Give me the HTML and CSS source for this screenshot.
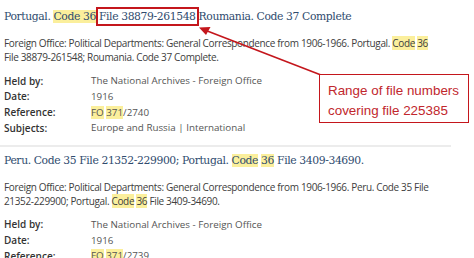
FILE: index.html
```html
<!DOCTYPE html>
<html>
<head>
<title>Search results</title>
<link rel="stylesheet" href="styles.css">
</head>
<body>

<div class="results">
    <!-- Record 1 -->
    <div class="record">
        <h2 class="record-title">Portugal. <mark>Code 36</mark> <span class="boxed">File 38879-261548</span> Roumania. Code 37 Complete</h2>
        <p class="record-desc">Foreign Office: Political Departments: General Correspondence from 1906-1966. Portugal. <mark>Code</mark> <mark>36</mark><br>File 38879-261548; Roumania. Code 37 Complete.</p>
        <table class="record-meta">
            <tr><th>Held by:</th><td>The National Archives - Foreign Office</td></tr>
            <tr><th>Date:</th><td>1916</td></tr>
            <tr><th>Reference:</th><td><mark>FO</mark> <mark>371</mark>/2740</td></tr>
            <tr><th>Subjects:</th><td>Europe and Russia | International</td></tr>
        </table>
    </div>

    <hr class="divider">

    <!-- Record 2 -->
    <div class="record">
        <h2 class="record-title">Peru. Code 35 File 21352-229900; Portugal. <mark>Code</mark> <mark>36</mark> File 3409-34690.</h2>
        <p class="record-desc">Foreign Office: Political Departments: General Correspondence from 1906-1966. Peru. Code 35 File<br>21352-229900; Portugal. <mark>Code</mark> <mark>36</mark> File 3409-34690.</p>
        <table class="record-meta">
            <tr><th>Held by:</th><td>The National Archives - Foreign Office</td></tr>
            <tr><th>Date:</th><td>1916</td></tr>
            <tr><th>Reference:</th><td><mark>FO</mark> <mark>371</mark>/2739</td></tr>
        </table>
    </div>
</div>

<!-- Annotation over the page -->
<svg class="annotation-arrow" width="474" height="258" viewBox="0 0 474 258">
    <line x1="206" y1="30.5" x2="321" y2="75" stroke="#c4161c" stroke-width="1.6"/>
    <polygon points="199,27.5 210.5,27 206,35" fill="#c4161c"/>
</svg>
<div class="callout">Range of file numbers<br>covering file 225385</div>

</body>
</html>
```

FILE: styles.css
```css
:root {
  --title-color: #2f4b6e;
  --text-color: #404040;
  --muted-color: #555;
  --highlight: #fbef9c;
  --annot-red: #c4161c;
}

body {
    margin: 0;
    padding: 7px 0 0 4px;
    background: #fff;
    font-family: 'Open Sans', sans-serif;
    color: var(--text-color);
    overflow: hidden;
}

mark {
    background: var(--highlight);
    color: inherit;
}

.record-title {
    margin: 0;
    font-family: 'DejaVu Serif', serif;
    font-weight: normal;
    font-size: 10.8px;
    line-height: 20px;
    letter-spacing: -0.4px;
    color: var(--title-color);
    white-space: nowrap;
}

.boxed {
    outline: 2px solid var(--annot-red);
    outline-offset: 1px;
}

.record-desc {
    margin: 9px 0 9px;
    font-size: 10px;
    line-height: 14px;
    letter-spacing: -0.35px;
    white-space: nowrap;
}

.record-meta {
    border-collapse: collapse;
    font-size: 9.8px;
}

.record-meta th,
.record-meta td {
    padding: 0;
    height: 15.67px;
    text-align: left;
    vertical-align: middle;
}

.record-meta th {
    width: 87px;
    font-weight: 600;
    font-size: 10px;
    color: #333;
}

.record-meta td {
    color: var(--muted-color);
}

.divider {
    width: 451px;
    margin: 9px 0 4px -4px;
    border: 0;
    border-top: 2px solid #ececec;
}

.annotation-arrow {
    position: absolute;
    left: 0;
    top: 0;
    pointer-events: none;
}

.callout {
    position: absolute;
    left: 319px;
    top: 74px;
    width: 140px;
    height: 41px;
    padding: 6px 0 0 8px;
    border: 1.5px solid var(--annot-red);
    background: #fff;
    font-family: 'Liberation Sans', sans-serif;
    font-size: 13.4px;
    line-height: 20px;
    color: #c1272d;
    white-space: nowrap;
}
```
